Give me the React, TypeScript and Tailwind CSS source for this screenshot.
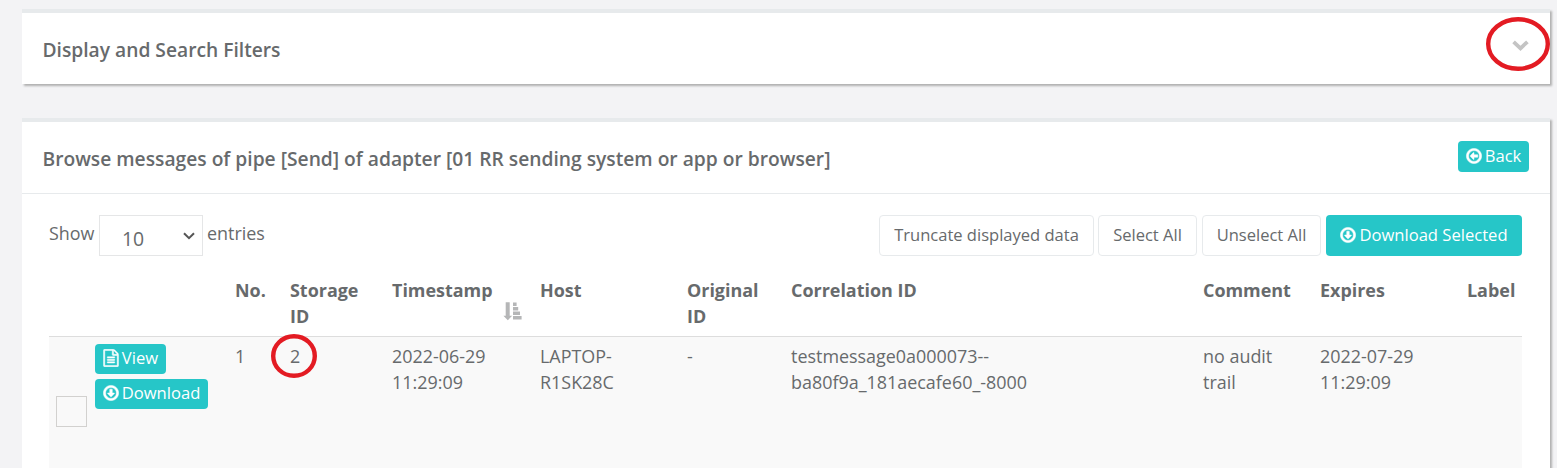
import React from 'react';

type IconProps = { className?: string };

function CircleArrow({ className = '' }: IconProps) {
  return (
    <svg viewBox="88 0 1616 1792" fill="currentColor" stroke="currentColor" strokeWidth="50" className={`h-[18px] w-[16px] shrink-0 ${className}`}>
      <path d="M1216 928q0 14-10 24l-319 319q-10 9-23 9t-23-9l-320-320q-15-16-7-35 8-20 30-20h192v-352q0-14 9-23t23-9h192q14 0 23 9t9 23v352h192q14 0 23 9t9 23z" transform="translate(32 0)" />
      <path d="M896 352q-148 0-273 73t-198 198-73 273 73 273 198 198 273 73 273-73 198-198 73-273-73-273-198-198-273-73zm768 544q0 209-103 385.5t-279.5 279.5-385.5 103-385.5-103-279.5-279.5-103-385.5 103-385.5 279.5-279.5 385.5-103 385.5 103 279.5 279.5 103 385.5z" />
    </svg>
  );
}

function FileIcon() {
  return (
    <svg viewBox="88 -30 1616 1852" fill="currentColor" stroke="currentColor" strokeWidth="50" className="h-[18px] w-[16px] shrink-0">
      <path d="M1596 380q28 28 48 76t20 88v1152q0 40-28 68t-68 28h-1344q-40 0-68-28t-28-68v-1600q0-40 28-68t68-28h896q40 0 88 20t76 48zm-444-244v376h376q-10-29-22-41l-313-313q-12-12-41-22zm384 1528v-1024h-416q-40 0-68-28t-28-68v-416h-768v1536h1280zm-1024-864q0-14 9-23t23-9h704q14 0 23 9t9 23v64q0 14-9 23t-23 9h-704q-14 0-23-9t-9-23v-64zm736 224q14 0 23 9t9 23v64q0 14-9 23t-23 9h-704q-14 0-23-9t-9-23v-64q0-14 9-23t23-9h704zm0 256q14 0 23 9t9 23v64q0 14-9 23t-23 9h-704q-14 0-23-9t-9-23v-64q0-14 9-23t23-9h704z" />
    </svg>
  );
}

function SortIcon() {
  return (
    <svg viewBox="0 0 19 19" fill="currentColor" className="absolute top-[36px] right-[7px] h-[19px] w-[19px] text-[#b5b6b7]">
      <path d="M2.7 0.3h4v13.5h2.5L4.8 18.3 0.4 13.8h2.3zM10 0.4h3.6v3.7H10zM10 4.9h5.2v3.7H10zM10 9.5h7v3.5h-7zM10 14h8.6v3.5H10z" />
    </svg>
  );
}

function Heading({ children }: { children: React.ReactNode }) {
  return <h5 className="mt-[3px] text-[19.23px] leading-[26px] font-semibold whitespace-nowrap">{children}</h5>;
}

const panel = 'border-t-4 border-[#e7eaec] bg-white shadow-[2px_2px_2px_#b0b0b0]';
const teal = 'flex items-center gap-[3px] rounded-[4px] bg-[#26c6c8] text-[16.6px] text-white whitespace-nowrap';
const outline = 'flex h-[41px] items-center justify-center rounded-[4px] border border-[#e7eaec] bg-white pb-[2px] text-[16.55px] whitespace-nowrap';

const headers = ['', '', 'No.', 'Storage ID', 'Timestamp', 'Host', 'Original ID', 'Correlation ID', 'Comment', 'Expires', 'Label'];
const widths = [35, 140, 55, 102, 148, 147, 104, 412, 117, 147, 66];

export default function App() {
  return (
    <div className="h-[468px] overflow-hidden bg-[#f3f3f5] pt-[9px] pr-[7px] pl-[22px] font-['Open_Sans',sans-serif] text-[17.93px] leading-[26px] text-[#676a6c]">
      <section className={`${panel} flex h-[75px] items-center justify-between pr-[21px] pl-[20.5px]`}>
        <Heading>Display and Search Filters</Heading>
        <div className="relative mt-[-7px] h-[11px] w-[17px]">
          <svg viewBox="0 0 17 11" className="h-[11px] w-[17px]" fill="none" stroke="#c4c4c4" strokeWidth="3.8">
            <path d="M1.6 1.8L8.5 8.3L15.4 1.8" />
          </svg>
          <svg viewBox="0 0 66 56" className="absolute top-[-24px] left-[-27px] h-[56px] w-[66px] max-w-none" fill="none" stroke="#e31b23" strokeWidth="4.4">
            <ellipse cx="33" cy="28" rx="29.8" ry="24.8" />
          </svg>
        </div>
      </section>

      <section className={`${panel} mt-[34px] h-[400px]`}>
        <header className="flex h-[72px] items-center justify-between border-b border-[#e7eaec] pr-[21px] pl-[20.5px]">
          <Heading>Browse messages of pipe [Send] of adapter [01 RR sending system or app or browser]</Heading>
          <button className={`${teal} mt-[-3px] h-[31px] w-[71px] justify-center pb-[1px]`}>
            <CircleArrow className="rotate-90" />
            <span>Back</span>
          </button>
        </header>

        <div className="pt-[21px] pr-[28px] pl-[27px]">
          <div className="flex h-[41px] justify-between">
            <div className="flex">
              <span className="mt-[5px] w-[50px]">Show</span>
              <div className="flex h-[41px] w-[104px] items-center justify-between border border-[#e5e6e7] pr-[7px] pl-[22px]">
                <span className="mt-[6px] text-[19.4px]">10</span>
                <svg viewBox="0 0 12 8" className="h-[8px] w-[12px]" fill="none" stroke="#555" strokeWidth="2">
                  <path d="M1 1.2L6 6.2L11 1.2" />
                </svg>
              </div>
              <span className="mt-[5px] ml-[4px]">entries</span>
            </div>
            <div className="flex">
              <button className={`${outline} mr-[4px] w-[215px]`}>Truncate displayed data</button>
              <button className={`${outline} mr-[5px] w-[99px]`}>Select All</button>
              <button className={`${outline} mr-[5px] w-[119px]`}>Unselect All</button>
              <button className={`${teal} h-[41px] w-[196px] justify-center pb-[2px]`}>
                <CircleArrow />
                <span>Download Selected</span>
              </button>
            </div>
          </div>

          <table className="mt-[10px] w-[1473px] table-fixed border-collapse text-left">
            <colgroup>
              {widths.map((w, i) => (
                <col key={i} style={{ width: w }} />
              ))}
            </colgroup>
            <thead>
              <tr className="h-[70px] border-b border-[#dddddd] align-top">
                {headers.map((h, i) => (
                  <th key={i} className="relative pt-[11px] pl-[11px] font-bold">
                    {h}
                    {h === 'Timestamp' && <SortIcon />}
                  </th>
                ))}
              </tr>
            </thead>
            <tbody>
              <tr className="h-[160px] bg-[#f9f9f9] align-top">
                <td className="pt-[59px] pl-[7px]">
                  <div className="h-[31px] w-[31px] border border-[#d2d1cf]" />
                </td>
                <td className="pt-[7px] pl-[11px]">
                  <button className={`${teal} h-[30px] w-[71px] justify-center pb-[1px]`}>
                    <FileIcon />
                    <span>View</span>
                  </button>
                  <button className={`${teal} mt-[5px] h-[30px] w-[113px] justify-center pb-[2px]`}>
                    <CircleArrow />
                    <span>Download</span>
                  </button>
                </td>
                <td className="pt-[6px] pl-[11px]">1</td>
                <td className="relative pt-[6px] pl-[11px]">
                  2
                  <svg viewBox="0 0 48 46" className="absolute top-[-4px] left-[-9px] h-[46px] w-[48px]" fill="none" stroke="#e31b23" strokeWidth="4.4">
                    <ellipse cx="24" cy="23" rx="20.8" ry="19.8" />
                  </svg>
                </td>
                <td className="pt-[6px] pl-[11px]">2022-06-29<br />11:29:09</td>
                <td className="pt-[6px] pl-[11px]">LAPTOP-<br />R1SK28C</td>
                <td className="pt-[6px] pl-[11px]">-</td>
                <td className="pt-[6px] pl-[11px]">testmessage0a000073--<br />ba80f9a_181aecafe60_-8000</td>
                <td className="pt-[6px] pl-[11px]">no audit<br />trail</td>
                <td className="pt-[6px] pl-[11px]">2022-07-29<br />11:29:09</td>
                <td />
              </tr>
            </tbody>
          </table>
        </div>
      </section>
    </div>
  );
}
